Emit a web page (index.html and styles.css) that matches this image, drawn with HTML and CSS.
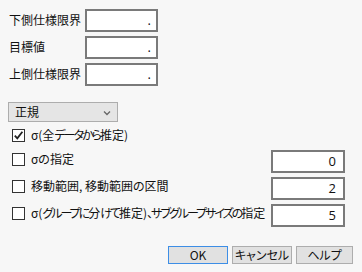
FILE: index.html
```html
<!DOCTYPE html>
<html>
<head>
<title>仕様限界</title>
<link rel="stylesheet" href="styles.css">
</head>
<body>

<div class="dialog">

  <div class="specs">
    <label class="spec-label">下側仕様限界</label>
    <div class="field dot">.</div>
    <label class="spec-label">目標値</label>
    <div class="field dot">.</div>
    <label class="spec-label">上側仕様限界</label>
    <div class="field dot">.</div>
  </div>

  <div class="select">
    <span>正規</span>
    <svg class="chev" width="8" height="6" viewBox="0 0 8 6"><path d="M1 1.5 L4 4.5 L7 1.5" fill="none" stroke="#666" stroke-width="1.3"/></svg>
  </div>

  <div class="checks">
    <div class="check-row">
      <span class="box"><svg width="11" height="11" viewBox="0 0 11 11"><path d="M1.8 5.6 L4.3 8.3 L9.4 1.8" fill="none" stroke="#222" stroke-width="1.8"/></svg></span>
      <span class="text">σ(全<span class="kana">データから</span>推定)</span>
    </div>
    <div class="check-row">
      <span class="box"></span>
      <span class="text">σの指定</span>
      <div class="field num">0</div>
    </div>
    <div class="check-row">
      <span class="box"></span>
      <span class="text">移動範囲, 移動範囲の区間</span>
      <div class="field num">2</div>
    </div>
    <div class="check-row">
      <span class="box"></span>
      <span class="text">σ(<span class="kana">グループに</span>分<span class="kana">けて</span>推定)<span class="kana">、サブグループサイズの</span>指定</span>
      <div class="field num">5</div>
    </div>
  </div>

  <div class="buttons">
    <button class="btn default">OK</button>
    <button class="btn">キャンセル</button>
    <button class="btn help">ヘルプ</button>
  </div>

</div>

</body>
</html>
```

FILE: styles.css
```css
body {
  margin: 0;
  background-color: #f7f7f7;
  font-family: "Noto Sans CJK JP", "Noto Sans", sans-serif;
  font-size: 12px;
  font-feature-settings: "palt";
  color: #111;
}

.dialog {
  width: 362px;
  height: 272px;
  padding: 9px 0 0 0;
  box-sizing: border-box;
  overflow: hidden;
}

.specs {
  display: grid;
  grid-template-columns: 76px 73px;
  row-gap: 4px;
  margin-left: 9px;
}

.spec-label {
  align-self: center;
  line-height: 14px;
  margin-top: -2px;
}

.field {
  height: 23px;
  border: 2px solid #7a7a7a;
  background-color: #fff;
  box-sizing: border-box;
  text-align: right;
  line-height: 19px;
}

.field.dot {
  padding-right: 5px;
  font-family: "Open Sans", "Noto Sans", sans-serif;
  font-size: 13px;
}

.field.num {
  width: 74px;
  flex: none;
  padding-right: 7px;
  font-family: "Open Sans", "Noto Sans", sans-serif;
  font-size: 13px;
}

.select {
  width: 110px;
  height: 20px;
  margin: 16px 0 0 8px;
  box-sizing: border-box;
  border: 1px solid #adadad;
  background-color: #e5e5e5;
  display: flex;
  align-items: center;
  justify-content: space-between;
  padding: 0 6px 0 6px;
  line-height: 16px;
}

.chev {
  margin-top: 1px;
}

.checks {
  display: grid;
  grid-template-columns: minmax(0, 1fr);
  grid-template-rows: 17px 23px 23px 23px;
  row-gap: 4px;
  margin: 7px 17px 0 12px;
}

.check-row {
  display: flex;
  align-items: flex-start;
  min-width: 0;
}

.box {
  width: 13px;
  height: 13px;
  box-sizing: border-box;
  border: 1px solid #333;
  background-color: #fff;
  margin-top: 3px;
  display: flex;
  align-items: center;
  justify-content: center;
  flex: none;
}

.text {
  margin-left: 6px;
  line-height: 18px;
  white-space: nowrap;
  flex: 1;
  min-width: 0;
}

.kana {
  letter-spacing: -2px;
}

.check-row:first-child .box {
  margin-top: 0;
}

.check-row:first-child .text {
  margin-top: -3px;
}

.buttons {
  display: flex;
  gap: 4px;
  margin: 19px 0 0 168px;
}

.btn {
  width: 60px;
  height: 18px;
  padding: 0;
  border: 1px solid #adadad;
  background-color: #e1e1e1;
  font-family: "Noto Sans CJK JP", "Noto Sans", sans-serif;
  font-size: 12px;
  font-feature-settings: "palt";
  line-height: 16px;
  white-space: nowrap;
  color: #111;
}

.btn.default {
  border: 1px solid #3d8ee6;
}

.btn.help {
  width: 57px;
}
```
